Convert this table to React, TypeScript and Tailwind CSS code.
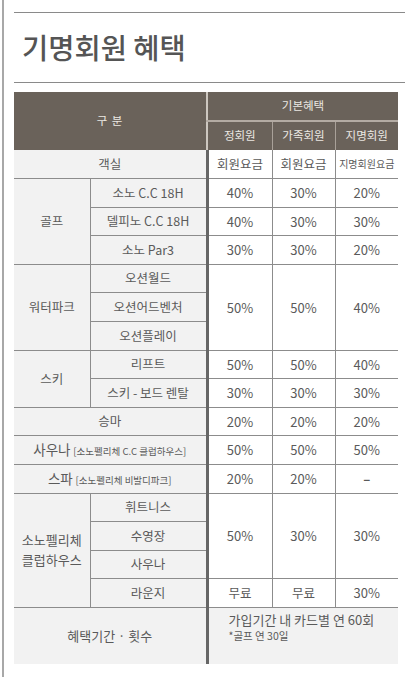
import React from "react";

const line = "border-[#8c8c8c]";
// label cells (light gray background)
const lab = `bg-[#f2f2f2] text-center border-b ${line}`;
const sub = `bg-[#f2f2f2] text-center border-b border-l ${line}`;
// value cells
const v1 = `text-center border-b border-l-[3px] ${line} border-l-[#666666]`;
const v = `text-center border-b border-l ${line}`;

const Pct = ({ children }: { children: React.ReactNode }) => (
  <span className="text-[13px]">{children}</span>
);

export default function App() {
  return (
    <div className="min-h-[677px] bg-white ml-[2px] border-l-2 border-[#a8a8a8] pl-[10px] pr-[9px] font-['Noto_Sans_CJK_KR','Noto_Sans',sans-serif] text-[#5a5a5a]">
      <div className="pt-[12px]">
        <div className="border-t border-[#8a8a8a]" />
        <div className="h-[69px] flex items-center pl-[8px]">
          <h1 className="text-[28.5px] font-medium text-[#555555] leading-none">
            기명회원 혜택
          </h1>
        </div>
        <div className="border-t border-[#8a8a8a]" />
      </div>

      <table className="mt-[9px] w-[384px] table-fixed border-collapse text-[12.5px] leading-none">
        <colgroup>
          <col className="w-[76px]" />
          <col className="w-[117px]" />
          <col className="w-[65px]" />
          <col className="w-[63px]" />
          <col className="w-[63px]" />
        </colgroup>
        <thead className="bg-[#6a625a] text-[#ece8e3] text-[11.5px] font-normal">
          <tr className="h-[29px]">
            <th rowSpan={2} colSpan={2} className="font-normal tracking-[1px]">
              구 분
            </th>
            <th colSpan={3} className="font-normal border-l-2 border-l-[#cdc7c0] border-b-2 border-b-[#b3aba3]">
              기본혜택
            </th>
          </tr>
          <tr className="h-[29px]">
            <th className="font-normal border-l-2 border-l-[#cdc7c0]">정회원</th>
            <th className="font-normal border-l border-l-[#a9a199]">가족회원</th>
            <th className="font-normal border-l border-l-[#a9a199]">지명회원</th>
          </tr>
        </thead>
        <tbody>
          <tr className="h-[28.6px]">
            <td colSpan={2} className={lab}>객실</td>
            <td className={v1}>회원요금</td>
            <td className={v}>회원요금</td>
            <td className={`${v} text-[10px]`}>지명회원요금</td>
          </tr>

          <tr className="h-[28.6px]">
            <td rowSpan={3} className={lab}>골프</td>
            <td className={sub}>소노 C.C 18H</td>
            <td className={v1}><Pct>40%</Pct></td>
            <td className={v}><Pct>30%</Pct></td>
            <td className={v}><Pct>20%</Pct></td>
          </tr>
          <tr className="h-[28.6px]">
            <td className={sub}>델피노 C.C 18H</td>
            <td className={v1}><Pct>40%</Pct></td>
            <td className={v}><Pct>30%</Pct></td>
            <td className={v}><Pct>30%</Pct></td>
          </tr>
          <tr className="h-[28.6px]">
            <td className={sub}>소노 Par3</td>
            <td className={v1}><Pct>30%</Pct></td>
            <td className={v}><Pct>30%</Pct></td>
            <td className={v}><Pct>20%</Pct></td>
          </tr>

          <tr className="h-[28.6px]">
            <td rowSpan={3} className={lab}>워터파크</td>
            <td className={sub}>오션월드</td>
            <td rowSpan={3} className={v1}><Pct>50%</Pct></td>
            <td rowSpan={3} className={v}><Pct>50%</Pct></td>
            <td rowSpan={3} className={v}><Pct>40%</Pct></td>
          </tr>
          <tr className="h-[28.6px]">
            <td className={sub}>오션어드벤처</td>
          </tr>
          <tr className="h-[28.6px]">
            <td className={sub}>오션플레이</td>
          </tr>

          <tr className="h-[28.6px]">
            <td rowSpan={2} className={lab}>스키</td>
            <td className={sub}>리프트</td>
            <td className={v1}><Pct>50%</Pct></td>
            <td className={v}><Pct>50%</Pct></td>
            <td className={v}><Pct>40%</Pct></td>
          </tr>
          <tr className="h-[28.6px]">
            <td className={sub}>스키 - 보드 렌탈</td>
            <td className={v1}><Pct>30%</Pct></td>
            <td className={v}><Pct>30%</Pct></td>
            <td className={v}><Pct>30%</Pct></td>
          </tr>

          <tr className="h-[28.6px]">
            <td colSpan={2} className={lab}>승마</td>
            <td className={v1}><Pct>20%</Pct></td>
            <td className={v}><Pct>20%</Pct></td>
            <td className={v}><Pct>20%</Pct></td>
          </tr>
          <tr className="h-[28.6px]">
            <td colSpan={2} className={lab}>
              <span className="text-[13.5px]">사우나</span>{" "}
              <span className="text-[9.5px]">[소노펠리체 C.C 클럽하우스]</span>
            </td>
            <td className={v1}><Pct>50%</Pct></td>
            <td className={v}><Pct>50%</Pct></td>
            <td className={v}><Pct>50%</Pct></td>
          </tr>
          <tr className="h-[28.6px]">
            <td colSpan={2} className={lab}>
              <span className="text-[13.5px]">스파</span>{" "}
              <span className="text-[9.5px]">[소노펠리체 비발디파크]</span>
            </td>
            <td className={v1}><Pct>20%</Pct></td>
            <td className={v}><Pct>20%</Pct></td>
            <td className={`${v} font-bold text-[13px]`}>–</td>
          </tr>

          <tr className="h-[28.6px]">
            <td rowSpan={4} className={`${lab} leading-[20px] text-[13px]`}>
              소노펠리체
              <br />
              클럽하우스
            </td>
            <td className={sub}>휘트니스</td>
            <td rowSpan={3} className={v1}><Pct>50%</Pct></td>
            <td rowSpan={3} className={v}><Pct>30%</Pct></td>
            <td rowSpan={3} className={v}><Pct>30%</Pct></td>
          </tr>
          <tr className="h-[28.6px]">
            <td className={sub}>수영장</td>
          </tr>
          <tr className="h-[28.6px]">
            <td className={sub}>사우나</td>
          </tr>
          <tr className="h-[28.6px]">
            <td className={sub}>라운지</td>
            <td className={v1}>무료</td>
            <td className={v}>무료</td>
            <td className={v}><Pct>30%</Pct></td>
          </tr>

          <tr className="h-[56px] bg-[#f2f2f2]">
            <td colSpan={2} className="text-center text-[13px]">
              혜택기간 · 횟수
            </td>
            <td colSpan={3} className="align-top border-l-[3px] border-l-[#666666] pl-[20px] pt-[3px]">
              <div className="text-[13px] leading-[17px]">가입기간 내 카드별 연 60회</div>
              <div className="text-[10.5px] leading-[15px]">*골프 연 30일</div>
            </td>
          </tr>
        </tbody>
      </table>
    </div>
  );
}
